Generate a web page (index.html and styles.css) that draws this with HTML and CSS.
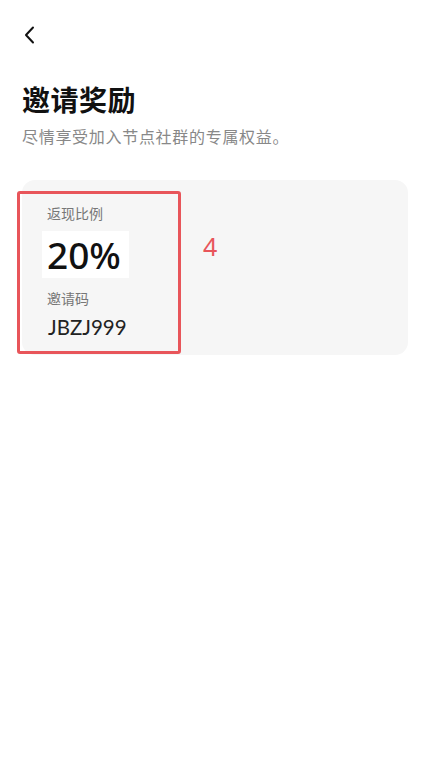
FILE: index.html
```html
<!DOCTYPE html>
<html lang="zh-CN">
<head>
<meta charset="utf-8">
<title>邀请奖励</title>
<link rel="stylesheet" href="styles.css">
</head>
<body>
<div class="page">
  <div class="nav">
    <svg class="back" width="12" height="18" viewBox="0 0 12 18" aria-hidden="true">
      <path d="M9 1.5 L2 9 L9 16.5" fill="none" stroke="#111" stroke-width="2" stroke-linecap="round" stroke-linejoin="round"/>
    </svg>
  </div>
  <h1 class="title">邀请奖励</h1>
  <p class="subtitle">尽情享受加入节点社群的专属权益。</p>
  <div class="card">
    <div class="info">
      <div class="label">返现比例</div>
      <div class="rate">20%</div>
      <div class="label label-code">邀请码</div>
      <div class="code">JBZJ999</div>
    </div>
    <div class="highlight"></div>
    <div class="marker">4</div>
  </div>
</div>
</body>
</html>
```

FILE: styles.css
```css
html, body {
  margin: 0;
  padding: 0;
  background: #ffffff;
}
body {
  font-family: "Noto Sans", "Noto Sans CJK SC", sans-serif;
  color: #111;
}
.page {
  padding: 0 20px 0 22px;
}
.nav {
  height: 80px;
  display: flex;
  align-items: flex-start;
  padding-top: 26px;
  box-sizing: border-box;
}
.back {
  margin-left: 2px;
  display: block;
}
.title {
  margin: 0;
  font-size: 28px;
  line-height: 40px;
  font-weight: 700;
  letter-spacing: 0.5px;
  color: #111;
}
.subtitle {
  margin: 5px 0 0;
  font-size: 16px;
  line-height: 24px;
  letter-spacing: 0.7px;
  color: #888;
}
.card {
  position: relative;
  margin-top: 31px;
  background: #f6f6f6;
  border-radius: 13px;
  height: 175px;
  padding: 24px 25px 0;
  box-sizing: border-box;
}
.info {
  display: flex;
  flex-direction: column;
  align-items: flex-start;
}
.label {
  font-size: 14px;
  line-height: 20px;
  color: #777;
}
.rate {
  margin: 7px 0 0 -5px;
  padding: 0 8px 0 5px;
  background: #fff;
  font-size: 37px;
  font-weight: 500;
  line-height: 47px;
  color: #111;
}
.label-code {
  margin-top: 11px;
}
.code {
  margin: 4px 0 0 1px;
  font-family: "Lato", "Noto Sans", sans-serif;
  font-size: 20.5px;
  line-height: 28px;
  color: #222;
}
.highlight {
  position: absolute;
  left: -5px;
  top: 11px;
  width: 164px;
  height: 163px;
  border: 3px solid #e8555a;
  border-radius: 3px;
  box-sizing: border-box;
}
.marker {
  position: absolute;
  left: 181px;
  top: 54px;
  font-size: 25px;
  line-height: 24px;
  color: #e8555a;
}
```
